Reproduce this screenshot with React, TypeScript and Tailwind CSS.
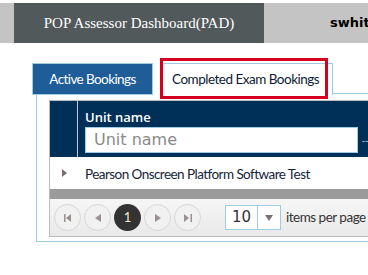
import React from "react";

const gill = { fontFamily: "Lato, 'Open Sans', sans-serif" };

function PagerBtn({ children }: { children: React.ReactNode }) {
  return (
    <div className="w-[27px] h-[27px] rounded-full border border-[#d6d6d6] flex items-center justify-center bg-[#f1f1f1]">
      {children}
    </div>
  );
}

export default function App() {
  return (
    <div className="w-[368px] h-[275px] bg-white overflow-hidden relative">
      {/* header */}
      <div className="mt-[3px] h-[40px] flex bg-[#c4c4c4]">
        <div className="w-[14px] shrink-0" />
        <div
          className="w-[250px] shrink-0 bg-[#51595a] flex items-center justify-center text-white text-[15px]"
          style={{ fontFamily: "'Liberation Serif', serif" }}
        >
          POP Assessor Dashboard(PAD)
        </div>
        <div
          className="pl-[66px] flex items-center font-bold text-[13px] text-black whitespace-nowrap"
          style={{ fontFamily: "'DejaVu Sans', sans-serif" }}
        >
          swhite
        </div>
      </div>

      {/* tabs */}
      <div className="relative mt-[20px] ml-[32px] flex items-end h-[32px]" style={gill}>
        <div className="w-[121px] h-[32px] shrink-0 bg-[#1f5d99] border border-[#9fcbe3] flex items-center justify-center text-white text-[13.5px] tracking-[-0.6px]">
          Active Bookings
        </div>
        <div className="ml-[9px] w-[171px] h-[32px] shrink-0 bg-white border border-[#9fcbe3] border-b-0 flex items-center pl-[9px] text-[#0b1b33] text-[13.5px] tracking-[-0.5px]">
          Completed Exam Bookings
        </div>
        <div className="flex-1 h-[1px] bg-[#9fcbe3] mb-[1px]" />
        <div className="absolute left-[128px] top-[-5px] w-[168px] h-[41px] border-[3px] border-[#d4001e]" />
      </div>

      {/* panel */}
      <div className="ml-[36px] border-l border-b border-[#9fcbe3] pl-[12px] pt-[5px] pb-[4px]">
        <div className="border border-[#bcbcbc] w-[330px]">
          {/* grid header */}
          <div className="h-[56px] bg-[#002f57] flex">
            <div className="w-[28px] shrink-0 border-r border-[#c8c8c8]" />
            <div className="pl-[7px] pt-[8px] flex flex-col">
              <div className="text-white text-[13px] font-semibold leading-[16px]" style={{ fontFamily: "'Open Sans', sans-serif" }}>
                Unit name
              </div>
              <div className="flex items-center mt-[2px]">
                <div className="w-[273px] h-[26px] bg-white border border-[#9fcbe3] flex items-center pl-[8px] text-[16px] text-[#8a8a8a]" style={{ fontFamily: "'DejaVu Sans', sans-serif" }}>
                  Unit name
                </div>
                <div className="ml-[4px] text-[#9fcbe3] text-[10px]">--</div>
              </div>
            </div>
          </div>
          {/* row */}
          <div className="h-[32px] flex items-center bg-white">
            <div className="w-[28px] shrink-0 flex justify-center">
              <svg width="5" height="8" viewBox="0 0 5 8">
                <path d="M0 0 L5 4 L0 8 Z" fill="#7a7070" />
              </svg>
            </div>
            <div className="pl-[7px] pt-[2px] text-[13.5px] tracking-[-0.55px] text-[#13243a] whitespace-nowrap" style={gill}>
              Pearson Onscreen Platform Software Test
            </div>
          </div>
          <div className="h-[10px] bg-[#9b9b9b]" />
          {/* pager */}
          <div className="h-[37px] bg-gradient-to-b from-[#f6f6f6] to-[#e9e9e9] flex items-center pl-[4px]">
            <div className="flex gap-[3px]">
              <PagerBtn>
                <svg width="8" height="8" viewBox="0 0 8 8"><rect x="0" y="0" width="1.5" height="8" fill="#9a9090" /><path d="M7 0 L2 4 L7 8 Z" fill="#9a9090" /></svg>
              </PagerBtn>
              <PagerBtn>
                <svg width="6" height="8" viewBox="0 0 6 8"><path d="M6 0 L0 4 L6 8 Z" fill="#9a9090" /></svg>
              </PagerBtn>
              <div className="w-[27px] h-[27px] rounded-full bg-[#333333] flex items-center justify-center text-[#f3e7c5] text-[13px]" style={gill}>
                1
              </div>
              <PagerBtn>
                <svg width="6" height="8" viewBox="0 0 6 8"><path d="M0 0 L6 4 L0 8 Z" fill="#9a9090" /></svg>
              </PagerBtn>
              <PagerBtn>
                <svg width="8" height="8" viewBox="0 0 8 8"><path d="M0 0 L5 4 L0 8 Z" fill="#9a9090" /><rect x="6.5" y="0" width="1.5" height="8" fill="#9a9090" /></svg>
              </PagerBtn>
            </div>
            <div className="ml-[24px] w-[56px] h-[25px] border border-[#9fcbe3] bg-white flex">
              <div className="w-[32px] border-r border-[#9fcbe3] flex items-center pl-[6px] text-[15px] text-[#333]" style={{ fontFamily: "'DejaVu Sans', sans-serif" }}>
                10
              </div>
              <div className="flex-1 flex items-center justify-center">
                <svg width="8" height="6" viewBox="0 0 8 6"><path d="M0 0 L8 0 L4 6 Z" fill="#7a7070" /></svg>
              </div>
            </div>
            <div className="ml-[5px] text-[13.5px] tracking-[-0.5px] text-[#333] whitespace-nowrap" style={gill}>
              items per page
            </div>
          </div>
        </div>
      </div>
    </div>
  );
}
